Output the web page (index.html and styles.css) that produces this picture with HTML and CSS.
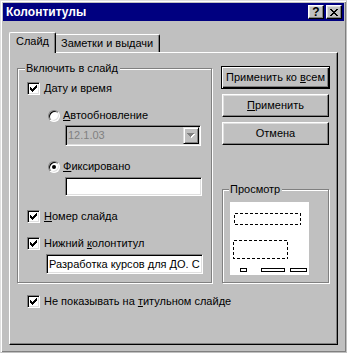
FILE: index.html
```html
<!DOCTYPE html>
<html lang="ru">
<head>
<meta charset="UTF-8">
<title>Колонтитулы</title>
<link rel="stylesheet" href="styles.css">
</head>
<body>
<div class="window">
  <div class="titlebar">
    <span class="title">Колонтитулы</span>
    <div class="title-buttons">
      <span class="tbtn help">?</span>
      <span class="tbtn">
        <svg width="8" height="7" viewBox="0 0 8 7"><path d="M0 0h2v1H0zM6 0h2v1H6zM1 1h2v1H1zM5 1h2v1H5zM2 2h4v1H2zM3 3h2v1H3zM2 4h4v1H2zM1 5h2v1H1zM5 5h2v1H5zM0 6h2v1H0zM6 6h2v1H6z" fill="#000"/></svg>
      </span>
    </div>
  </div>

  <div class="tabs">
    <div class="tab active">Слайд</div>
    <div class="tab">Заметки и выдачи</div>
  </div>

  <div class="panel">
    <div class="panel-row">
      <fieldset class="group include">
        <legend>Включить в слайд</legend>
        <div class="check first">
          <span class="box"><svg width="7" height="7" viewBox="0 0 7 7"><path d="M0 2h1v3H0zM1 3h1v3H1zM2 4h1v3H2zM3 3h1v3H3zM4 2h1v3H4zM5 1h1v3H5zM6 0h1v3H6z" fill="#000"/></svg></span>
          <span><u>Д</u>ату и время</span>
        </div>
        <div class="check radio-row">
          <span class="radio"></span>
          <span><u>А</u>втообновление</span>
        </div>
        <div class="combo">
          <span class="combo-text">12.1.03</span>
          <span class="combo-btn">
            <svg width="8" height="5" viewBox="0 0 8 5"><path d="M1 1h7v1H1zM2 2h5v1H2zM3 3h3v1H3zM4 4h1v1H4z" fill="#fff"/><path d="M0 0h7v1H0zM1 1h5v1H1zM2 2h3v1H2zM3 3h1v1H3z" fill="#808080"/></svg>
          </span>
        </div>
        <div class="check radio-row fixed">
          <span class="radio on"></span>
          <span><u>Ф</u>иксировано</span>
        </div>
        <div class="field short"></div>
        <div class="check num">
          <span class="box"><svg width="7" height="7" viewBox="0 0 7 7"><path d="M0 2h1v3H0zM1 3h1v3H1zM2 4h1v3H2zM3 3h1v3H3zM4 2h1v3H4zM5 1h1v3H5zM6 0h1v3H6z" fill="#000"/></svg></span>
          <span><u>Н</u>омер слайда</span>
        </div>
        <div class="check num">
          <span class="box"><svg width="7" height="7" viewBox="0 0 7 7"><path d="M0 2h1v3H0zM1 3h1v3H1zM2 4h1v3H2zM3 3h1v3H3zM4 2h1v3H4zM5 1h1v3H5zM6 0h1v3H6z" fill="#000"/></svg></span>
          <span>Нижний <u>к</u>олонтитул</span>
        </div>
        <div class="field long"><span>Разработка курсов для ДО. С</span></div>
      </fieldset>

      <div class="side">
        <div class="btn default"><span>Применить ко <u>в</u>сем</span></div>
        <div class="btn"><span><u>П</u>рименить</span></div>
        <div class="btn"><span>Отмена</span></div>

        <fieldset class="group preview-group">
          <legend>Просмотр</legend>
          <div class="preview">
            <svg width="79" height="73" viewBox="0 0 79 73">
              <g fill="none" stroke="#000" stroke-width="1" stroke-dasharray="3 2" shape-rendering="crispEdges">
                <rect x="4.5" y="11.5" width="66" height="11"/>
                <rect x="3.5" y="38.5" width="54" height="18"/>
              </g>
              <g fill="none" stroke="#000" stroke-width="1" shape-rendering="crispEdges">
                <rect x="10.5" y="66.5" width="6" height="3"/>
                <rect x="31.5" y="66.5" width="23" height="3"/>
                <rect x="60.5" y="66.5" width="16" height="3"/>
              </g>
            </svg>
          </div>
        </fieldset>
      </div>
    </div>

    <div class="check bottom">
      <span class="box"><svg width="7" height="7" viewBox="0 0 7 7"><path d="M0 2h1v3H0zM1 3h1v3H1zM2 4h1v3H2zM3 3h1v3H3zM4 2h1v3H4zM5 1h1v3H5zM6 0h1v3H6z" fill="#000"/></svg></span>
      <span>Не показывать на <u>т</u>итульном слайде</span>
    </div>
  </div>
</div>
</body>
</html>
```

FILE: styles.css
```css
/* Classic dialog window */
* {
  box-sizing: border-box;
}
body {
  margin: 0;
  background: #c0c0c0;
  font-family: "Liberation Sans", Arial, sans-serif;
  font-size: 11px;
  line-height: 13px;
  color: #000;
}
.window {
  width: 347px;
  height: 353px;
  padding: 2px;
  background: #c0c0c0;
  border: 1px solid;
  border-color: #dfdfdf #c0c0c0 #c0c0c0 #dfdfdf;
  box-shadow: inset 1px 1px #fff, inset -1px -1px #808080;
}

/* Title bar */
.titlebar {
  height: 18px;
  display: flex;
  align-items: center;
  justify-content: space-between;
  padding: 0 2px 0 3px;
  background: #000080;
  color: #fff;
}
.title {
  font-weight: bold;
  font-size: 12px;
  padding-top: 1px;
}
.title-buttons {
  display: flex;
  gap: 2px;
}
.tbtn {
  width: 16px;
  height: 14px;
  display: flex;
  align-items: center;
  justify-content: center;
  background: #c0c0c0;
  color: #000;
  border: 1px solid;
  border-color: #fff #000 #000 #fff;
  box-shadow: inset -1px -1px #808080, inset 1px 1px #dfdfdf;
}
.help {
  font-weight: bold;
  font-size: 12px;
}

/* Tabs */
.tabs {
  display: flex;
  align-items: flex-end;
  height: 21px;
  margin: 11px 0 0 6px;
}
.tab {
  height: 18px;
  width: 104px;
  margin-bottom: 1px;
  padding: 2px 0 0 5px;
  border-top: 1px solid #fff;
  border-right: 1px solid #000;
  border-top-right-radius: 2px;
  box-shadow: inset -1px 0 #808080;
}
.tab.active {
  position: relative;
  z-index: 1;
  width: 47px;
  height: 21px;
  margin-bottom: 0;
  padding: 2px 0 0 6px;
  background: #c0c0c0;
  border-left: 1px solid #fff;
  border-top-left-radius: 2px;
}
.panel {
  width: 329px;
  height: 293px;
  margin: -1px 0 0 6px;
  padding: 9px 0 0 7px;
  border: 1px solid;
  border-color: #fff #000 #000 #fff;
  box-shadow: inset -1px -1px #808080;
}
.panel-row {
  display: flex;
  align-items: flex-start;
}

/* Group boxes */
.group {
  margin: 0;
  padding: 0;
  border: 1px solid #808080;
  box-shadow: inset 1px 1px #fff, 1px 1px #fff;
}
.group legend {
  padding: 0 2px 0 1px;
  background: #c0c0c0;
}
.include {
  width: 195px;
  height: 221px;
  padding-bottom: 7px;
}
.include legend {
  margin-left: 7px;
}

/* Check boxes and radios */
.check {
  display: flex;
  align-items: center;
  gap: 4px;
  height: 13px;
}
.include .check {
  margin-left: 9px;
}
.check.first {
  margin-top: 7px;
}
.include .check.radio-row {
  margin-left: 30px;
  margin-top: 14px;
  gap: 3px;
}
.check.num {
  margin-top: 14px;
}
.box {
  width: 13px;
  height: 13px;
  flex: none;
  display: flex;
  align-items: center;
  justify-content: center;
  background: #fff;
  border: 1px solid;
  border-color: #808080 #fff #fff #808080;
  box-shadow: inset 1px 1px #000, inset -1px -1px #dfdfdf;
}
.radio {
  width: 12px;
  height: 12px;
  flex: none;
  display: flex;
  align-items: center;
  justify-content: center;
  border-radius: 50%;
  background: #fff;
  border: 1px solid;
  border-color: #808080 #fff #fff #808080;
  box-shadow: inset 1px 1px #000, inset -1px -1px #dfdfdf;
}
.radio.on::after {
  content: "";
  width: 4px;
  height: 4px;
  border-radius: 50%;
  background: #000;
}

/* Combo and edit fields */
.combo, .field {
  display: flex;
  align-items: center;
  border: 1px solid;
  border-color: #808080 #fff #fff #808080;
  box-shadow: inset 1px 1px #000, inset -1px -1px #dfdfdf;
}
.combo {
  width: 136px;
  height: 21px;
  margin: 3px 0 0 47px;
  padding: 1px 1px 1px 2px;
  color: #808080;
}
.combo-text {
  flex: 1;
}
.combo-btn {
  width: 16px;
  height: 17px;
  display: flex;
  align-items: center;
  justify-content: center;
  border: 1px solid;
  border-color: #dfdfdf #000 #000 #dfdfdf;
  box-shadow: inset 1px 1px #fff, inset -1px -1px #808080;
}
.field {
  background: #fff;
}
.field.short {
  width: 137px;
  height: 19px;
  margin: 4px 0 0 47px;
}
.field.long {
  width: 157px;
  height: 20px;
  margin: 4px 0 0 28px;
  padding: 0 2px 0 2px;
  white-space: nowrap;
  overflow: hidden;
}
.check.fixed {
  margin-top: 14px;
}

/* Right side */
.side {
  width: 109px;
  margin-left: 9px;
  padding-top: 4px;
}
.btn {
  width: 107px;
  height: 23px;
  margin: 0 1px 5px;
  display: flex;
  align-items: center;
  justify-content: center;
  border: 1px solid;
  border-color: #fff #000 #000 #fff;
  box-shadow: inset -1px -1px #808080, inset 1px 1px #dfdfdf;
}
.btn.default {
  width: 109px;
  margin: 0 0 5px;
  border-color: #000;
  box-shadow: inset 1px 1px #fff, inset -1px -1px #000, inset -2px -2px #808080;
}
.preview-group {
  width: 107px;
  height: 100px;
  margin: 38px 0 0 1px;
}
.preview-group legend {
  margin-left: 6px;
}
.preview {
  width: 79px;
  height: 73px;
  margin: 6px 0 0 7px;
  background: #fff;
}
.preview svg {
  display: block;
}

.check.bottom {
  margin: 12px 0 0 10px;
}
```
